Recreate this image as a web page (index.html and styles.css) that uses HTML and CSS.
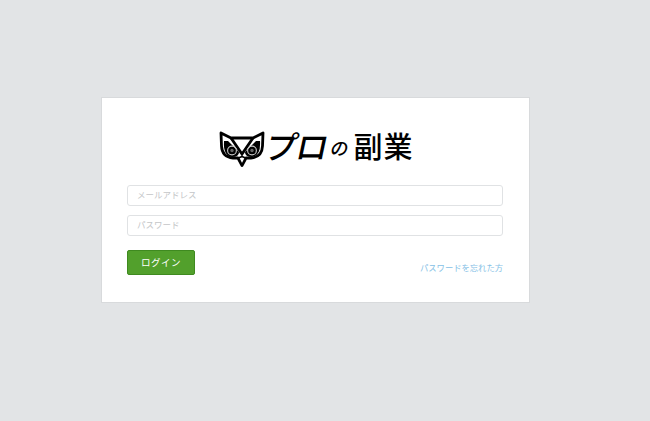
FILE: index.html
```html
<!DOCTYPE html>
<html lang="ja">
<head>
    <meta charset="UTF-8">
    <meta name="viewport" content="width=device-width, initial-scale=1.0">
    <title>プロの副業 ログイン</title>
    <link rel="stylesheet" href="styles.css">
</head>
<body>
    <div class="card">
        <div class="logo">
            <svg class="owl" width="46" height="36" viewBox="0 0 46 36">
                <path d="M2 2 L12 7 H34 L44 2 L43.5 15 Q43 26 32 27 L27 27 L23 34.5 L19 27 L14 27 Q3 26 2.5 15 Z" fill="#fff" stroke="#000" stroke-width="2.8" stroke-linejoin="round"/>
                <path d="M12 7 L23 23 L34 7" fill="none" stroke="#000" stroke-width="2.8"/>
                <path d="M5 10 L9 10 L20 21 Q20 26 13 26 Q4 25 5 10 Z" fill="#000"/>
                <path d="M41 10 L37 10 L26 21 Q26 26 33 26 Q42 25 41 10 Z" fill="#000"/>
                <circle cx="13" cy="19.5" r="4.4" fill="none" stroke="#c8c8c8" stroke-width="1.1"/>
                <circle cx="33" cy="19.5" r="4.4" fill="none" stroke="#c8c8c8" stroke-width="1.1"/>
                <circle cx="13" cy="19.5" r="1.7" fill="#666"/>
                <circle cx="33" cy="19.5" r="1.7" fill="#666"/>
                <path d="M19.5 27 L23 25.5 L26.5 27 L23 34 Z" fill="#fff" stroke="#000" stroke-width="1.8" stroke-linejoin="round"/>
            </svg>
            <div class="logo-text">
                <span class="logo-pro">プロ</span>
                <span class="logo-no">の</span>
                <span class="logo-job">副業</span>
            </div>
        </div>
        <form class="login-form">
            <input class="field" type="text" placeholder="メールアドレス">
            <input class="field" type="password" placeholder="パスワード">
            <div class="actions">
                <button class="btn-login" type="button">ログイン</button>
                <a class="forgot" href="#">パスワードを忘れた方</a>
            </div>
        </form>
    </div>
</body>
</html>
```

FILE: styles.css
```css
* {
    margin: 0;
    padding: 0;
    box-sizing: border-box;
}

body {
    background: #e2e4e6;
    min-height: 100vh;
    font-family: "Liberation Sans", "Noto Sans CJK JP", sans-serif;
    overflow: hidden;
}

.card {
    width: 429px;
    height: 206px;
    margin: 97px 0 0 101px;
    padding: 32px 26px 0 25px;
    background: #fff;
    border: 1px solid #d8dadc;
}

/* Logo */
.logo {
    display: flex;
    justify-content: center;
    align-items: center;
    gap: 1px;
    height: 37px;
    margin-left: 3px;
}

.logo-text {
    display: flex;
    align-items: center;
    margin-bottom: 7px;
    color: #000;
    font-family: "Noto Sans CJK JP", sans-serif;
    line-height: 1;
}

.logo-pro {
    font-size: 32px;
    font-weight: 500;
    letter-spacing: -1px;
    transform: skewX(-12deg);
}

.logo-no {
    font-size: 18px;
    font-weight: 500;
    margin: 3px 5px 0 2px;
    transform: skewX(-12deg);
}

.logo-job {
    font-size: 29px;
    font-weight: 500;
    letter-spacing: 1px;
}

/* Form */
.login-form {
    display: flex;
    flex-direction: column;
    gap: 9px;
    margin-top: 18px;
}

.field {
    width: 100%;
    height: 21px;
    padding: 0 9px 2px;
    background: #fff;
    border: 1px solid #e0e2e4;
    border-radius: 3px;
    font-family: inherit;
    font-size: 8.5px;
}

.field::placeholder {
    color: #c4c6c8;
}

.actions {
    display: flex;
    justify-content: space-between;
    align-items: flex-end;
    margin-top: 5px;
}

.btn-login {
    width: 68px;
    height: 25px;
    padding-bottom: 2px;
    background: #52a02c;
    border: 1px solid #3f8a20;
    border-radius: 2px;
    color: #fff;
    font-family: inherit;
    font-size: 9.5px;
    letter-spacing: 0.5px;
}

.forgot {
    margin-bottom: 2px;
    color: #86bfe6;
    font-size: 8.3px;
    text-decoration: none;
}
```
